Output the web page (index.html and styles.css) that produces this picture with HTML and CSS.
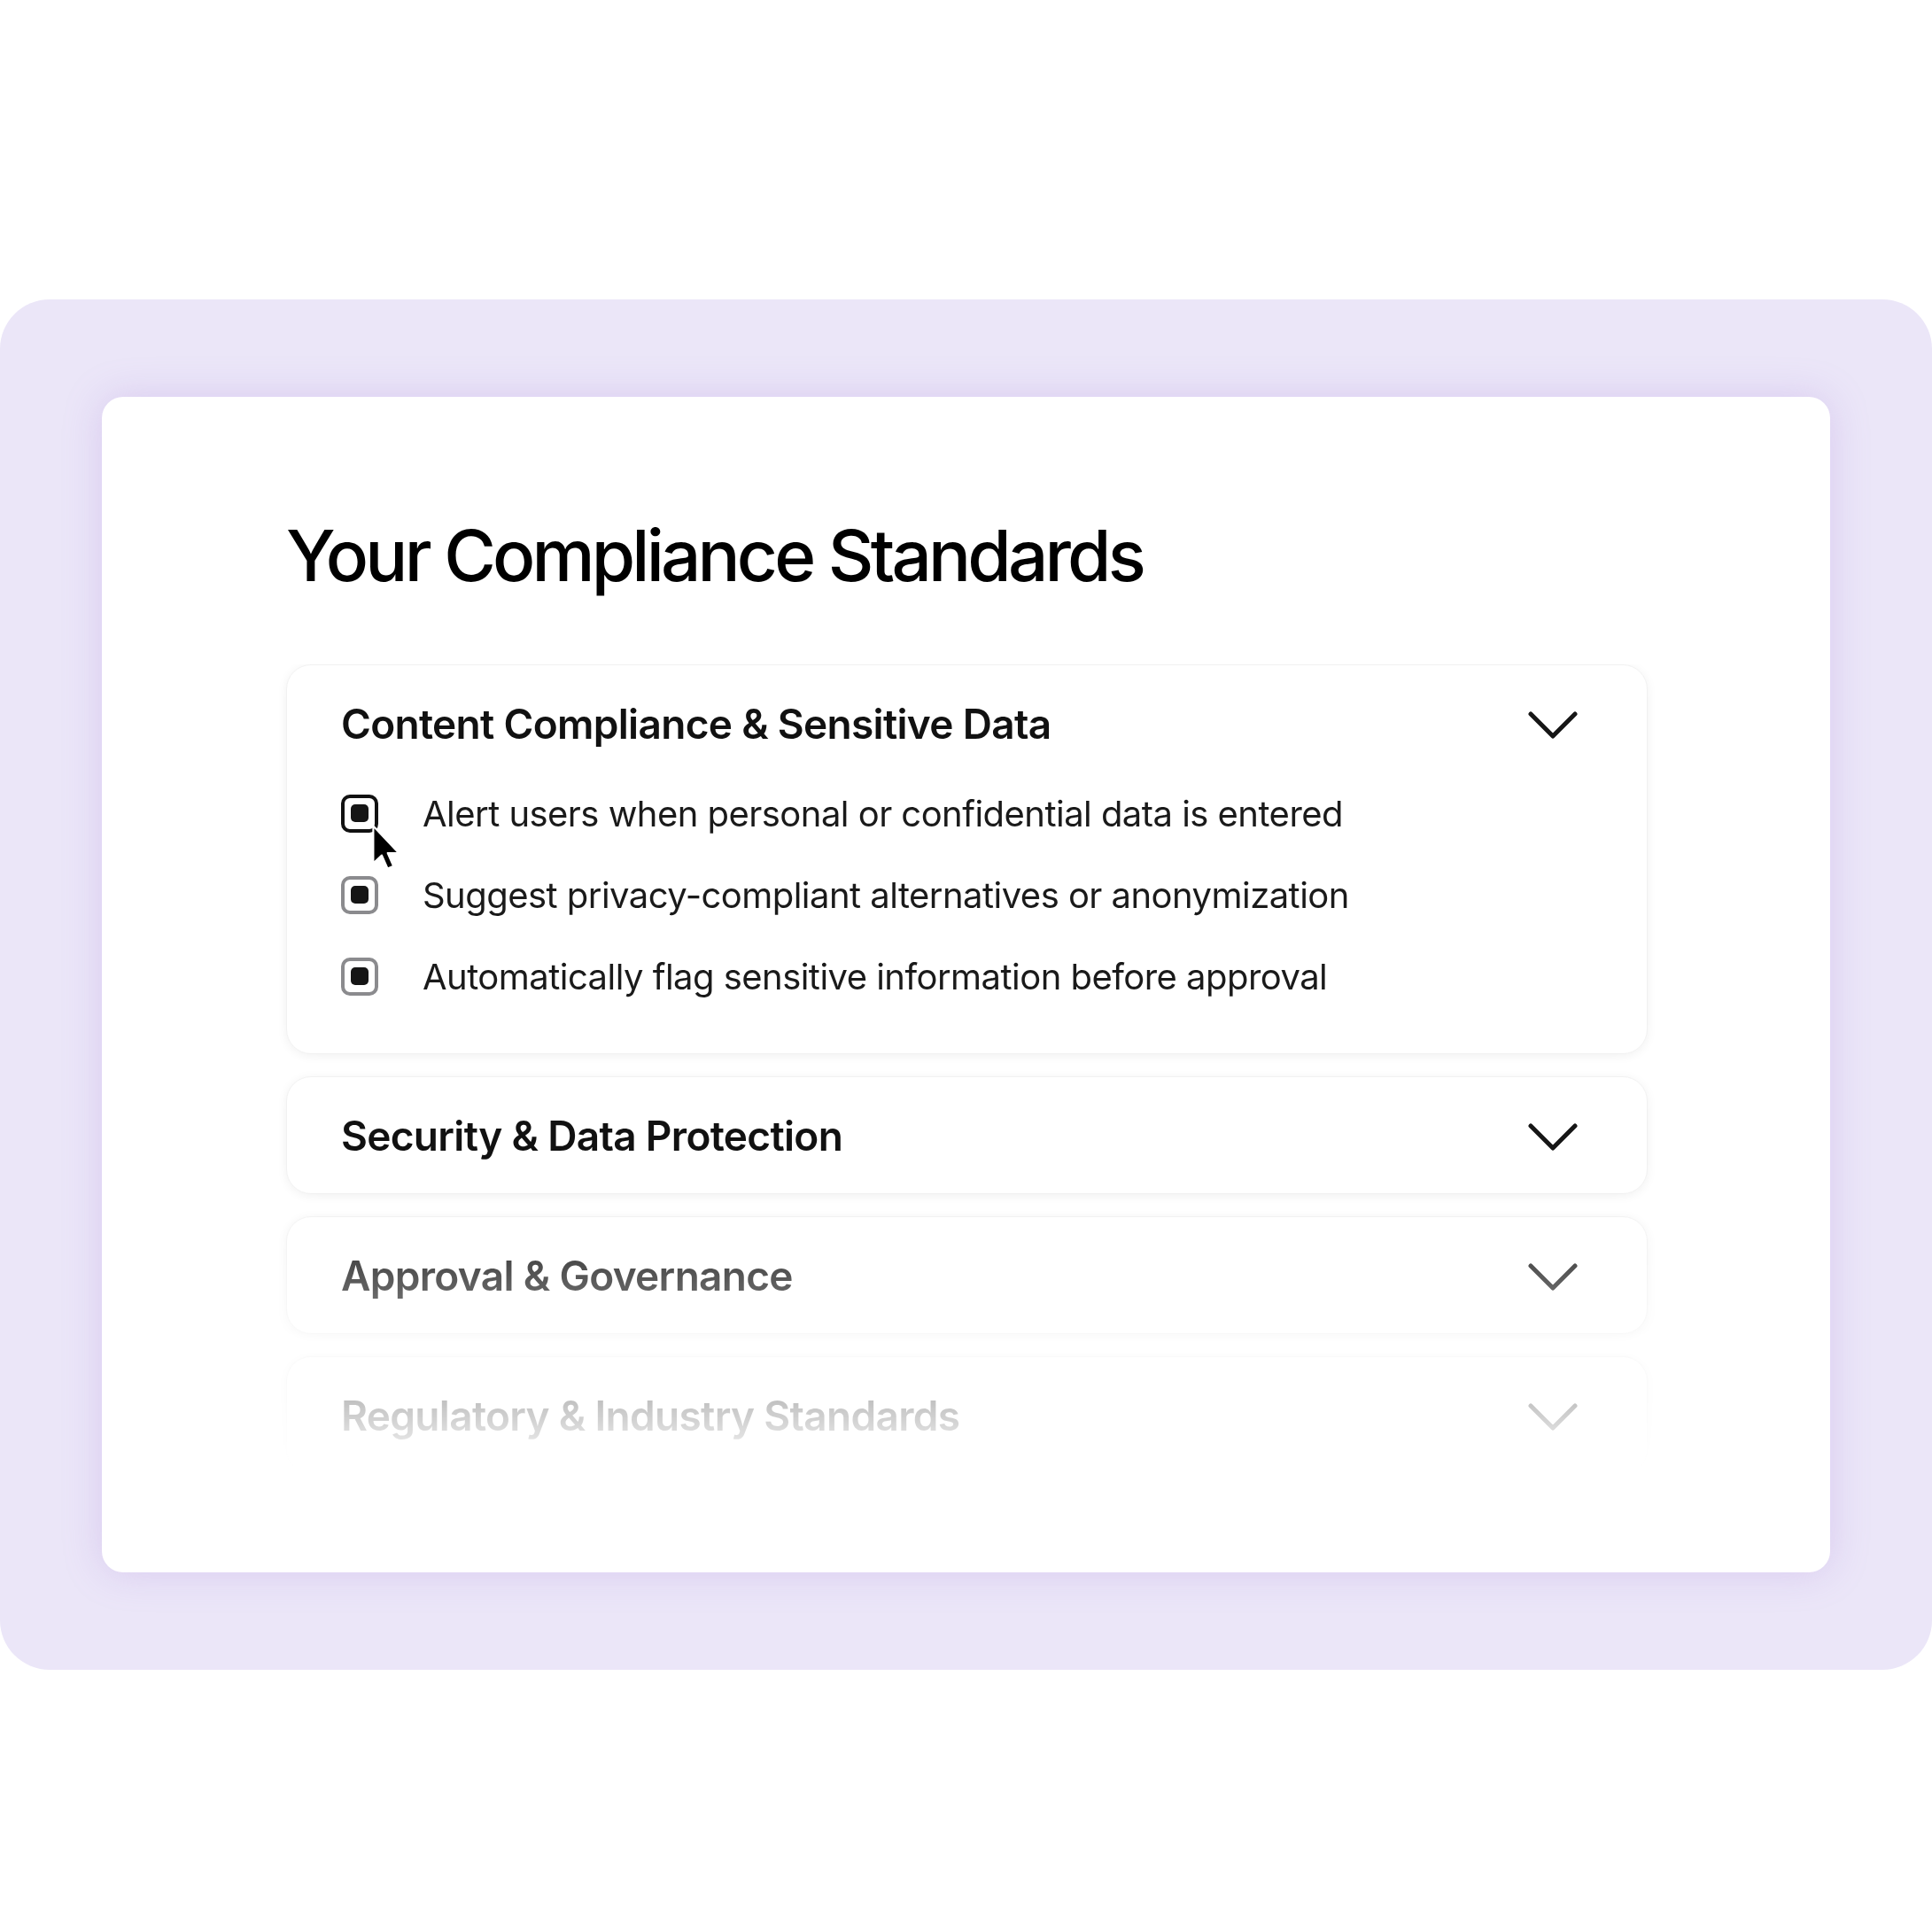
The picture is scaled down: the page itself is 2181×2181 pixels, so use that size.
FILE: index.html
```html
<!DOCTYPE html>
<html lang="en">
<head>
  <meta charset="UTF-8">
  <title>Your Compliance Standards</title>
  <link rel="stylesheet" href="styles.css">
</head>
<body>

  <div class="panel">
    <div class="card">
      <h1>Your Compliance Standards</h1>

      <div class="standards">

        <div class="section open">
          <div class="section-head">
            <h3>Content Compliance &amp; Sensitive Data</h3>
            <svg class="chevron" viewBox="0 0 56 32"><path d="M3 3 L28 28 L53 3"/></svg>
          </div>
          <ul class="options">
            <li>
              <span class="check active">
                <span class="dot"></span>
                <svg class="cursor" viewBox="0 0 30 48"><path d="M2 2 L2 37 L10 29.5 L15.5 42 L21 39.6 L15.6 27.4 L26 27.4 Z"/></svg>
              </span>
              Alert users when personal or confidential data is entered
            </li>
            <li>
              <span class="check"><span class="dot"></span></span>
              Suggest privacy-compliant alternatives or anonymization
            </li>
            <li>
              <span class="check"><span class="dot"></span></span>
              Automatically flag sensitive information before approval
            </li>
          </ul>
        </div>

        <div class="section">
          <div class="section-head">
            <h3>Security &amp; Data Protection</h3>
            <svg class="chevron" viewBox="0 0 56 32"><path d="M3 3 L28 28 L53 3"/></svg>
          </div>
        </div>

        <div class="section">
          <div class="section-head">
            <h3>Approval &amp; Governance</h3>
            <svg class="chevron" viewBox="0 0 56 32"><path d="M3 3 L28 28 L53 3"/></svg>
          </div>
        </div>

        <div class="section">
          <div class="section-head">
            <h3>Regulatory &amp; Industry Standards</h3>
            <svg class="chevron" viewBox="0 0 56 32"><path d="M3 3 L28 28 L53 3"/></svg>
          </div>
        </div>

      </div>
    </div>
  </div>

</body>
</html>
```

FILE: styles.css
```css
* {
  box-sizing: border-box;
}

body {
  margin: 0;
  background: #fff;
  font-family: 'Inter', 'Noto Sans', sans-serif;
  color: #111;
}

.panel {
  margin-top: 338px;
  height: 1547px;
  background: #ebe6f8;
  border-radius: 56px;
  padding: 110px 115px;
}

.card {
  height: 100%;
  background: #fff;
  border-radius: 24px;
  box-shadow: 0 0 44px rgba(170, 130, 220, 0.28);
  padding: 0 206px 0 208px;
  overflow: hidden;
}

h1 {
  margin: 0;
  padding-top: 139px;
  height: 302px;
  font-size: 80px;
  font-weight: 500;
  letter-spacing: -0.048em;
  line-height: 1;
  color: #000;
}

.standards {
  display: flex;
  flex-direction: column;
  gap: 25px;
  height: 912px;
  padding: 0 14px;
  margin: 0 -14px;
  overflow: hidden;
  -webkit-mask-image: linear-gradient(to bottom, #000 0, #000 600px, transparent 912px);
  mask-image: linear-gradient(to bottom, #000 0, #000 600px, transparent 912px);
}

.section {
  flex-shrink: 0;
  background: #fff;
  border-radius: 28px;
  border: 1px solid #f1f1f1;
  box-shadow: 0 2px 12px rgba(0, 0, 0, 0.06);
}

.section-head {
  height: 131px;
  display: flex;
  align-items: center;
  justify-content: space-between;
  padding: 0 78px 0 61px;
}

.section-head h3 {
  margin: 0;
  font-size: 46px;
  font-weight: 600;
  letter-spacing: -0.015em;
}

.chevron {
  margin-top: 5px;
  width: 56px;
  height: 32px;
  fill: none;
  stroke: #161616;
  stroke-width: 5;
  stroke-linecap: round;
  stroke-linejoin: round;
}

.options {
  list-style: none;
  margin: 0;
  padding: 0 61px 51px;
  display: flex;
  flex-direction: column;
  gap: 20px;
}

.options li {
  height: 72px;
  display: flex;
  align-items: center;
  gap: 50px;
  font-size: 40px;
  letter-spacing: -0.0135em;
  color: #1a1a1a;
}

.check {
  position: relative;
  flex-shrink: 0;
  width: 42px;
  height: 43px;
  border: 4px solid #8b8b8e;
  border-radius: 10px;
  display: flex;
  align-items: center;
  justify-content: center;
}

.check.active {
  border-color: #111;
}

.dot {
  width: 20px;
  height: 20px;
  border-radius: 5px;
  background: #151515;
}

.cursor {
  position: absolute;
  left: 30px;
  top: 29px;
  width: 36px;
  height: 58px;
  fill: #000;
  stroke: #fff;
  stroke-width: 1.8;
  stroke-linejoin: round;
}
```
